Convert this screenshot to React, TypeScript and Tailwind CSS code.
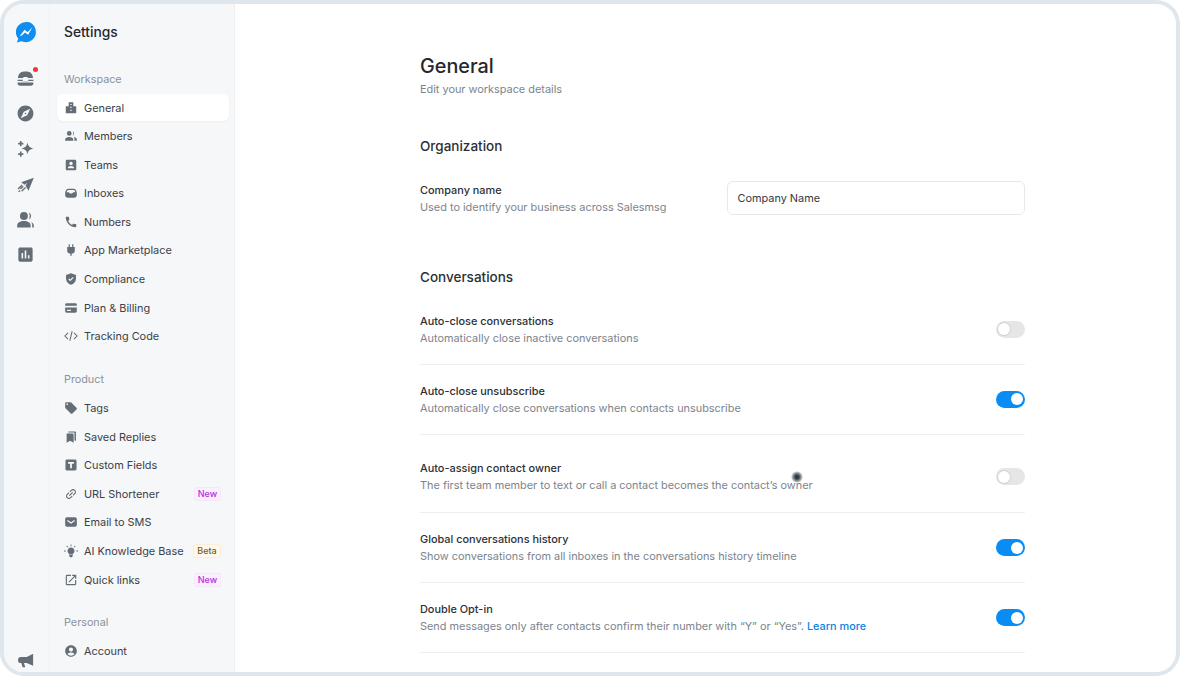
import React from "react";
import { MdCall, MdLocalOffer, MdLink, MdOpenInNew, MdAccountCircle, MdExplore, MdAssessment } from "react-icons/md";

type IconT = React.ComponentType<{ className?: string }>;

const svg = (children: React.ReactNode): IconT =>
  function Icon({ className }) {
    return (
      <svg viewBox="0 0 24 24" fill="currentColor" className={className}>
        {children}
      </svg>
    );
  };

const Building = svg(
  <path fillRule="evenodd" d="M8 2h8v7h4a1 1 0 0 1 1 1v11H3V10a1 1 0 0 1 1-1h4V2zm3 3v2h2V5h-2zm0 5v2h2v-2h-2zm0 5v2h2v-2h-2z" />
);
const Members = svg(
  <>
    <circle cx="9" cy="7.500" r="4" />
    <path d="M2 20v-2c0-3 3.500-4.500 7-4.500s7 1.500 7 4.500v2H2z" />
    <path d="M14.500 3.700a4 4 0 0 1 0 7.600c1-1 1.500-2.300 1.500-3.800s-.5-2.800-1.500-3.800zM17 13.800c2.800.4 5 1.800 5 4.200v2h-4v-2.300c0-1.500-.4-2.800-1-3.900z" />
  </>
);
const TeamBox = svg(
  <path fillRule="evenodd" d="M5 3h14a2 2 0 0 1 2 2v14a2 2 0 0 1-2 2H5a2 2 0 0 1-2-2V5a2 2 0 0 1 2-2zm7 3.500a3 3 0 1 0 0 6 3 3 0 0 0 0-6zM6.500 17.500h11c0-2.500-3-3.700-5.500-3.700s-5.500 1.200-5.500 3.700z" />
);
const Tray = svg(
  <path fillRule="evenodd" d="M7 4.500h10c2.500 0 4.500 3 5 7v4.500a4 4 0 0 1-4 4H6a4 4 0 0 1-4-4v-4.500c.5-4 2.500-7 5-7zm.5 2.300c-1.500 0-2.700 2-3 4h3.800c.5 1.500 2 2.200 3.700 2.200s3.200-.7 3.700-2.200h3.800c-.3-2-1.500-4-3-4h-9z" />
);
const Plug = svg(
  <path d="M8 2h2v5h4V2h2v5h2.500v6a5 5 0 0 1-5.300 5v4h-2.400v-4a5 5 0 0 1-5.300-5V7H8V2z" />
);
const Card = svg(
  <path fillRule="evenodd" d="M4.500 4h15A2.500 2.500 0 0 1 22 6.500V8H2V6.500A2.500 2.500 0 0 1 4.500 4zM2 11h20v6.500a2.500 2.500 0 0 1-2.500 2.500h-15A2.500 2.500 0 0 1 2 17.500V11zm3 4v2h7v-2H5z" />
);
const Code: IconT = ({ className }) => (
  <svg viewBox="0 0 24 24" fill="none" stroke="currentColor" strokeWidth="1.800" className={className}>
    <path d="M7 6.500 1.500 12 7 17.500M17 6.500 22.500 12 17 17.500M14 3.500 10 20.500" />
  </svg>
);
const Bookmarks = svg(
  <>
    <path d="M4.500 6H15a1.500 1.500 0 0 1 1.500 1.500V22l-6-3.500-6 3.500V6z" />
    <path d="M7.500 2.500H19A1.500 1.500 0 0 1 20.500 4v15l-2.500-1.500V5.200a.8.8 0 0 0-.8-.8H7.500V2.500z" />
  </>
);
const Mail = svg(
  <path fillRule="evenodd" d="M5 4h14a3 3 0 0 1 3 3v10a3 3 0 0 1-3 3H5a3 3 0 0 1-3-3V7a3 3 0 0 1 3-3zm1.500 4.700-1.200 1.600L12 15l6.700-4.700-1.200-1.600L12 12.500 6.500 8.700z" />
);
const Toolbox = svg(
  <path d="M2.500 11.500C2.500 6.500 6 3 10 3h4c4 0 7.500 3.500 7.500 8.500h-6.200L14 10h-4l-1.300 1.500H2.500zM2 13.500h6.500v2h7v-2H22v1.800H2v-1.800zM2 17.200h20V18c0 1.700-1.300 3-3 3H5c-1.700 0-3-1.300-3-3v-.8z" />
);
const Sparkle = svg(
  <path d="M14.500 4.500c.9 4.800 2.700 6.600 8 7.500-5.300.9-7.100 2.700-8 7.500-.9-4.800-2.700-6.600-8-7.500 5.300-.9 7.100-2.700 8-7.500zM5 2.500h2v2.300h2.300v2H7v2.300H5V6.800H2.700v-2H5V2.500zM5 15.800h2v2.300h2.300v2H7v2.300H5v-2.300H2.700v-2H5v-2.300z" />
);
const Send = svg(
  <>
    <path d="M22.500 3.500 6.500 9l4.300 3.300 3.500-2.600-2.300 3.700 3.700 6.400L22.500 3.500z" />
    <path d="m2 17 5-5 1.200 1.200-5 5zM8.500 13.700l1.200 1.200-3.500 3.500L5 17.200zM6.500 20l5-5 1.200 1.200-5 5zM2.800 20.700l1.700-1.700 1.200 1.200L4 21.900z" />
  </>
);
const People = svg(
  <>
    <circle cx="10" cy="7.500" r="5" />
    <path d="M1.500 22v-2.500c0-3.300 3.800-5.500 8.500-5.500s8.500 2.200 8.500 5.500V22h-17z" />
    <path d="M16 2.800a5.200 5.200 0 0 1 0 9.500c.8-1.200 1.300-3 1.300-4.800s-.5-3.500-1.300-4.700zM19 15c2.100.9 3.500 2.500 3.500 4.500V22h-2v-2.700c0-1.700-.5-3.200-1.500-4.300z" />
  </>
);
const Megaphone = svg(
  <path d="M21.500 3.500v16L13 16H9.300l1.700 5.500H7.500L5.700 16H5a3.500 3.500 0 0 1-3.500-3.500v-1A3.500 3.500 0 0 1 5 8h8l8.500-4.500z" />
);
const ShieldCheck = svg(
  <path fillRule="evenodd" d="M12 2 3.500 5v6.500c0 5 3.700 9 8.500 10.500 4.800-1.500 8.500-5.500 8.500-10.500V5L12 2zm-1.300 13.700-3.200-3.200 1.500-1.500 1.700 1.700 4.300-4.300 1.500 1.500-5.800 5.800z" />
);
const TBox = svg(
  <path fillRule="evenodd" d="M5 2.500h14A2.500 2.500 0 0 1 21.500 5v14a2.500 2.500 0 0 1-2.500 2.500H5A2.500 2.500 0 0 1 2.500 19V5A2.500 2.500 0 0 1 5 2.500zM7 7v3h3.500v7.500h3V10H17V7H7z" />
);
const Bulb = svg(
  <>
    <path d="M12 6a6 6 0 0 0-3.500 10.900V18h7v-1.100A6 6 0 0 0 12 6zM9 19h6v1.500L13.500 22.500h-3L9 20.500V19z" />
    <path d="M11.200 1h1.600v3h-1.600zM0 11.200h3v1.600H0zM21 11.200h3v1.600h-3zM4 3.900l1.100-1.100 2.100 2.100-1.100 1.100zM20 3.900l-1.100-1.100-2.100 2.100 1.100 1.100z" />
  </>
);
const Logo = () => (
  <svg viewBox="0 0 24 24" className="w-[22px] h-[22px]">
    <path fill="#0f8df0" d="M13.500 1C7 .5 1.500 5 1 11c-.3 3.200.8 6.200 2.600 8.300L2 23.500l4.800-1.300c1.500.6 3 .9 4.700.9 6.200 0 11-4.500 11.300-10.300C23 6.800 19.500 1.500 13.500 1z" />
    <path fill="#fff" d="M5 16.500 10.500 9.500l3.200 2.700 5.300-5.400-4.700 8.200-3.400-2.500-3.400 3.400z" />
  </svg>
);

type Item = { label: string; icon: IconT; active?: boolean; badge?: "New" | "Beta"; cls?: string };

const workspace: Item[] = [
  { label: "General", icon: Building, active: true },
  { label: "Members", icon: Members },
  { label: "Teams", icon: TeamBox },
  { label: "Inboxes", icon: Tray },
  { label: "Numbers", icon: MdCall },
  { label: "App Marketplace", icon: Plug },
  { label: "Compliance", icon: ShieldCheck },
  { label: "Plan & Billing", icon: Card },
  { label: "Tracking Code", icon: Code },
];
const product: Item[] = [
  { label: "Tags", icon: MdLocalOffer },
  { label: "Saved Replies", icon: Bookmarks },
  { label: "Custom Fields", icon: TBox },
  { label: "URL Shortener", icon: MdLink, badge: "New", cls: "-rotate-45" },
  { label: "Email to SMS", icon: Mail },
  { label: "AI Knowledge Base", icon: Bulb, badge: "Beta" },
  { label: "Quick links", icon: MdOpenInNew, badge: "New" },
];
const personal: Item[] = [{ label: "Account", icon: MdAccountCircle }];

function Group({ title, items }: { title: string; items: Item[] }) {
  return (
    <div className="flex flex-col">
      <div className="h-[16px] pl-[7px] text-[10.800px] leading-[16px] text-[#8a929c] mb-[6.500px]">{title}</div>
      <div className="flex flex-col gap-[1.600px]">
        {items.map((it) => (
          <div
            key={it.label}
            className={`h-[27px] rounded-[6px] flex items-center pl-[7px] pr-[8px] ${it.active ? "bg-white shadow-[0_1px_3px_rgba(0,0,0,0.04)]" : ""}`}
          >
            <it.icon className={`w-[14px] h-[14px] text-[#656d76] shrink-0 ${it.cls ?? ""}`} />
            <span className="ml-[6px] text-[10.900px] leading-[16px] text-[#3b4148] whitespace-nowrap">{it.label}</span>
            {it.badge === "New" && (
              <span className="ml-auto h-[14px] w-[27px] flex items-center justify-center rounded-[3px] border border-[#f6e6fc] bg-[#fbf0ff] text-[9px] font-medium text-[#b52ee0]">New</span>
            )}
            {it.badge === "Beta" && (
              <span className="ml-auto h-[14px] w-[28px] flex items-center justify-center rounded-[3px] border border-[#fbeed8] bg-[#fff8ea] text-[9px] font-medium text-[#7d5b20]">Beta</span>
            )}
          </div>
        ))}
      </div>
    </div>
  );
}

function Toggle({ on }: { on?: boolean }) {
  return (
    <div className={`w-[29px] h-[17px] rounded-full flex items-center shrink-0 ${on ? "bg-[#0a8cf5] justify-end pr-[2px]" : "bg-[#e6e6e6] pl-[2px]"}`}>
      <div className={`w-[12px] h-[12px] rounded-full bg-white ${on ? "" : "ring-1 ring-[#d2d2d2]"}`} />
    </div>
  );
}

function Row({ title, desc, on, tall, link }: { title: string; desc: string; on?: boolean; tall?: boolean; link?: string }) {
  return (
    <div className={`flex items-center justify-between border-b border-[#eeeff1] ${tall ? "h-[78px] pt-[7px]" : "h-[70.200px]"}`}>
      <div className="flex flex-col gap-[1px]">
        <div className="text-[10.900px] leading-[16px] font-medium text-[#2b3036]">{title}</div>
        <div className="text-[10.900px] leading-[16px] text-[#7c848d]">
          {desc}
          {link && <span className="text-[#0a84e0] font-medium"> {link}</span>}
        </div>
      </div>
      <Toggle on={on} />
    </div>
  );
}

export default function App() {
  return (
    <div className="w-[1180px] h-[676px] bg-white" style={{ fontFamily: "Inter, sans-serif" }}>
      <div className="relative w-full h-full border-[4px] border-[#dfe6ec] rounded-[24px] overflow-hidden flex bg-white">
        <aside className="w-[46px] shrink-0 bg-[#f6f7f9] border-r border-[#f0f2f4] flex flex-col items-center text-[#656d76]">
          <div className="mt-[17px] mb-[25px] mr-[2px]"><Logo /></div>
          <div className="flex flex-col items-center gap-[16.200px] mr-[2px] mt-[1px]">
            <div className="relative">
              <Toolbox className="w-[19px] h-[19px]" />
              <span className="absolute -top-[2px] -right-[3px] w-[5px] h-[5px] rounded-full bg-[#f8333c]" />
            </div>
            <MdExplore className="w-[19px] h-[19px]" />
            <Sparkle className="w-[19px] h-[19px]" />
            <Send className="w-[19px] h-[19px]" />
            <People className="w-[19px] h-[19px]" />
            <MdAssessment className="w-[19px] h-[19px]" />
          </div>
          <Megaphone className="w-[18px] h-[18px] mt-auto mb-[3px] mr-[2px]" />
        </aside>
        <nav className="w-[185px] shrink-0 bg-[#f6f7f9] border-r border-[#eef0f2] pl-[7px] pr-[5px] overflow-hidden">
          <div className="pl-[7px] pt-[19px] h-[67.500px] text-[13.800px] leading-[18px] font-medium text-[#24282d]">Settings</div>
          <div className="flex flex-col gap-[22.200px]">
            <Group title="Workspace" items={workspace} />
            <Group title="Product" items={product} />
            <Group title="Personal" items={personal} />
          </div>
        </nav>
        <main className="flex-1 pl-[185px] overflow-hidden">
          <div className="w-[605px]">
            <h1 className="pt-[48px] text-[19.800px] leading-[28px] font-medium text-[#24282d]">General</h1>
            <p className="mt-[1px] text-[10.900px] leading-[16px] text-[#7c848d]">Edit your workspace details</p>
            <h2 className="mt-[40px] text-[13.500px] leading-[18px] font-medium text-[#2b3036]">Organization</h2>
            <div className="mt-[26px] flex items-center justify-between">
              <div className="flex flex-col gap-[1px]">
                <div className="text-[10.900px] leading-[16px] font-medium text-[#2b3036]">Company name</div>
                <div className="text-[10.900px] leading-[16px] text-[#7c848d]">Used to identify your business across Salesmsg</div>
              </div>
              <div className="w-[298px] h-[34px] rounded-[6px] border border-[#e6e8eb] flex items-center pl-[9.500px] text-[10.900px] text-[#33383e]">Company Name</div>
            </div>
            <h2 className="mt-[53px] text-[13.500px] leading-[18px] font-medium text-[#2b3036]">Conversations</h2>
            <div className="mt-[8.600px]">
              <Row title="Auto-close conversations" desc="Automatically close inactive conversations" />
              <Row title="Auto-close unsubscribe" desc="Automatically close conversations when contacts unsubscribe" on />
              <Row title="Auto-assign contact owner" desc="The first team member to text or call a contact becomes the contact’s owner" tall />
              <Row title="Global conversations history" desc="Show conversations from all inboxes in the conversations history timeline" on />
              <Row title="Double Opt-in" desc="Send messages only after contacts confirm their number with “Y” or “Yes”." link="Learn more" on />
            </div>
          </div>
        </main>
        <div className="absolute left-[787px] top-[467px] w-[12px] h-[12px] rounded-full bg-[radial-gradient(circle,#333a42_20%,rgba(60,66,74,0.5)_50%,rgba(255,255,255,0)_72%)]" />
      </div>
    </div>
  );
}
